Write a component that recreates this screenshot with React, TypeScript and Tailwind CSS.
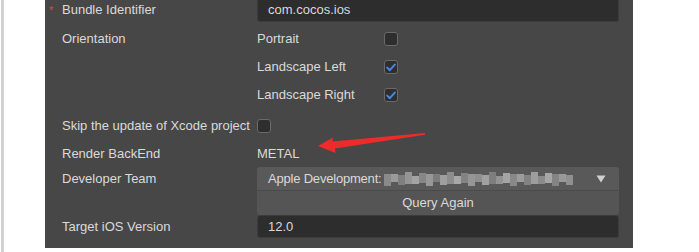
import type { ReactNode } from 'react';

const mosaic = [
  '#8a8a8a', '#9a9a9a', '#7f7f7f', '#959595', '#a3a3a3', '#868686', '#989898', '#7c7c7c',
  '#9f9f9f', '#8d8d8d', '#a8a8a8', '#838383', '#969696', '#8f8f8f', '#a1a1a1', '#7e7e7e',
  '#939393', '#a5a5a5', '#888888', '#9c9c9c', '#828282', '#9e9e9e', '#8b8b8b', '#a6a6a6',
  '#848484', '#999999', '#909090',
];

function Checkbox({ checked }: { checked?: boolean }) {
  return (
    <div className="w-[14px] h-[14px] rounded-[3px] bg-[#2e2e2e] border border-[#6a6a6a] flex items-center justify-center">
      {checked && (
        <svg width="10" height="9" viewBox="0 0 10 9">
          <path d="M1.2 4.6 L3.8 7.2 L8.8 1.6" fill="none" stroke="#4a86e8" strokeWidth="2" strokeLinecap="round" strokeLinejoin="round" />
        </svg>
      )}
    </div>
  );
}

function Row({ label, required, h, children }: { label?: string; required?: boolean; h: string; children?: ReactNode }) {
  return (
    <div className={`flex items-center ${h}`}>
      <div className="w-[212px] flex items-center shrink-0">
        <span className="w-[17px] text-[#e8433c] text-[11px] leading-none pl-[4px]">{required ? '*' : ''}</span>
        <span>{label}</span>
      </div>
      <div className="flex-1 flex items-center h-full">{children}</div>
    </div>
  );
}

export default function App() {
  return (
    <div className="w-[699px] h-[252px] bg-white flex overflow-hidden relative" style={{ fontFamily: '"Liberation Sans", Arial, sans-serif' }}>
      <div className="w-[3px] ml-[1px] bg-[#d2d2d2] h-full" />
      <div className="w-[41px]" />
      <div className="w-[588px] h-[248px] bg-[#474747] text-[#dadada] text-[13px] pr-[14px] flex flex-col">
        <div className="-mt-[2px] flex flex-col">
          <Row label="Bundle Identifier" required h="h-[24px]">
            <div className="w-full h-[24px] rounded-[3px] bg-[#2d2d2d] border border-[#3c3c3c] flex items-center px-[10px]">
              com.cocos.ios
            </div>
          </Row>
          <div className="h-[3px]" />
          <Row label="Orientation" h="h-[28px]">
            <span className="w-[127px]">Portrait</span>
            <Checkbox />
          </Row>
          <Row h="h-[28px]">
            <span className="w-[127px]">Landscape Left</span>
            <Checkbox checked />
          </Row>
          <Row h="h-[28px]">
            <span className="w-[127px]">Landscape Right</span>
            <Checkbox checked />
          </Row>
          <div className="h-[3px]" />
          <Row label="Skip the update of Xcode project" h="h-[28px]">
            <Checkbox />
          </Row>
          <Row label="Render BackEnd" h="h-[27px]">
            <span>METAL</span>
          </Row>
          <Row label="Developer Team" h="h-[23px]">
            <div className="w-full h-[23px] rounded-t-[3px] bg-[#595959] flex items-center pl-[11px] pr-[13px]">
              <span className="tracking-[-0.2px]">Apple Development:</span>
              <div className="flex ml-[3px] h-[14px] items-center">
                {mosaic.map((c, i) => (
                  <div
                    key={i}
                    className="w-[7px]"
                    style={{ backgroundColor: c, height: i % 3 === 0 ? 12 : i % 3 === 1 ? 8 : 10, marginTop: i % 2 === 0 ? 2 : -2 }}
                  />
                ))}
              </div>
              <div className="flex-1" />
              <svg width="10" height="8" viewBox="0 0 10 8">
                <path d="M0.5 0.5 H9.5 L5 7.5 Z" fill="#d0d0d0" />
              </svg>
            </div>
          </Row>
          <Row h="h-[25px]">
            <div className="w-full h-[25px] rounded-b-[3px] bg-[#555555] border-t border-[#4b4b4b] flex items-center justify-center">
              Query Again
            </div>
          </Row>
          <Row label="Target iOS Version" h="h-[23px]">
            <div className="w-full h-[23px] rounded-[3px] bg-[#2d2d2d] border border-[#3c3c3c] flex items-center px-[10px]">
              12.0
            </div>
          </Row>
        </div>
      </div>
      <svg className="absolute left-0 top-0 pointer-events-none" width="699" height="252">
        <polygon points="318,146 333,137.5 332.5,141.5 425,133 425,134.8 335,148.5 335.5,153" fill="#ee2b2b" />
      </svg>
    </div>
  );
}
